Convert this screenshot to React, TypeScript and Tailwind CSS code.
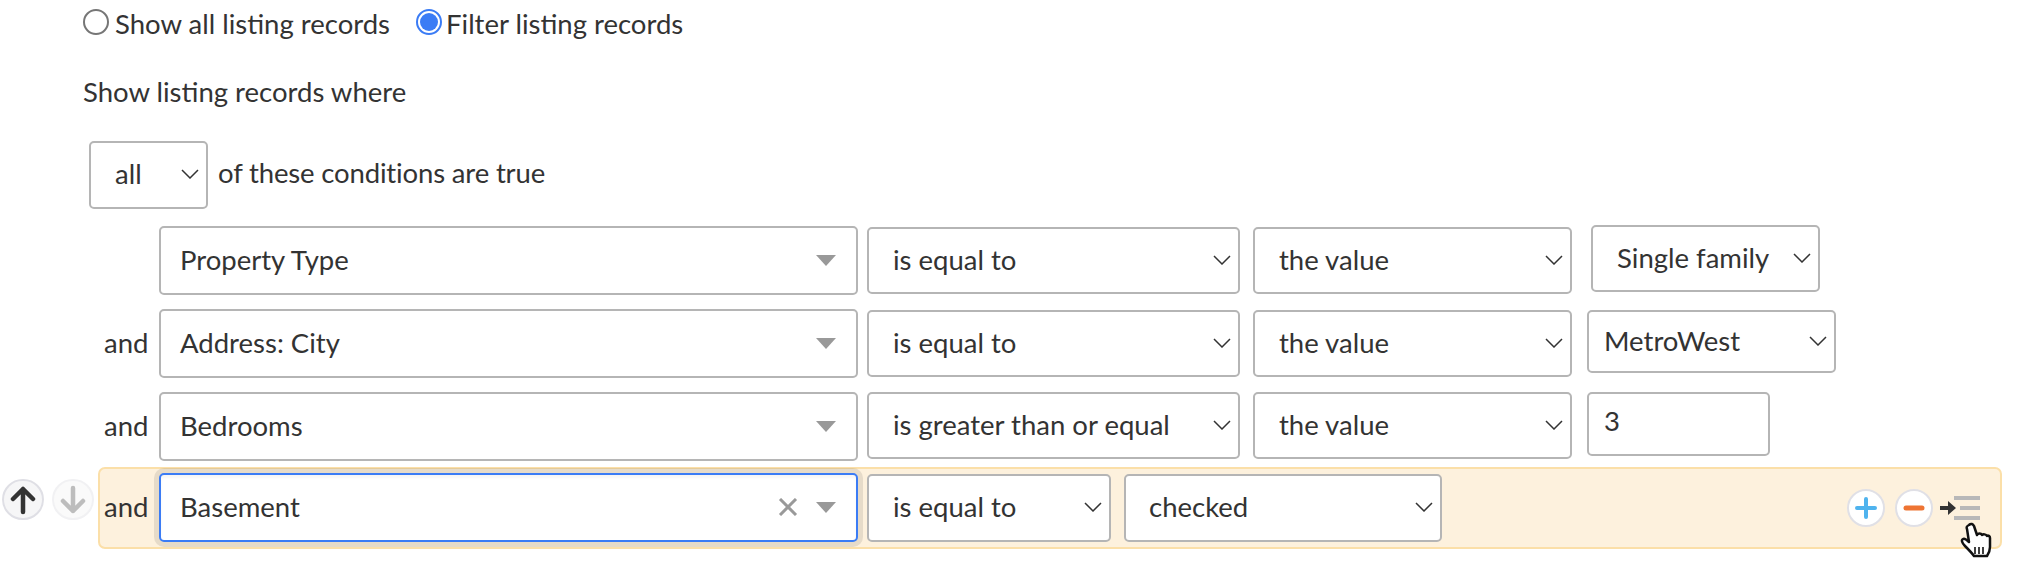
import React from "react";

function Chevron() {
  return (
    <svg width="18" height="10" viewBox="0 0 18 10" fill="none" className="shrink-0">
      <path d="M1 1l8 8 8-8" stroke="#333" strokeWidth="1.5" />
    </svg>
  );
}

function Caret() {
  return (
    <svg width="20" height="11" viewBox="0 0 20 11" className="shrink-0">
      <path d="M0 0h20L10 11z" fill="#999" />
    </svg>
  );
}

// 필드 선택 (넓은 콤보박스)
function Field({ label, focused }: { label: string; focused?: boolean }) {
  return (
    <div
      className={
        "flex h-[69px] w-[699px] shrink-0 items-center rounded-[5px] bg-white pb-[1px] pl-[19px] pr-[20px] " +
        (focused
          ? "border-2 border-[#3b7cf5] shadow-[0_0_0_5px_rgba(0,0,0,0.09),inset_0_3px_3px_rgba(0,0,0,0.04)]"
          : "border-2 border-[#b5b5b5]")
      }
    >
      <span className="flex-1">{label}</span>
      {focused && (
        <svg width="20" height="18" viewBox="0 0 20 18" fill="none" className="mr-[18px]">
          <path d="M2 1l16 16M18 1L2 17" stroke="#999" strokeWidth="3" />
        </svg>
      )}
      <Caret />
    </div>
  );
}

function Select({ label, className }: { label: string; className: string }) {
  return (
    <div
      className={
        "flex shrink-0 items-center justify-between rounded-[5px] border-2 border-[#b5b5b5] bg-white pb-[2px] pr-[7px] " +
        className
      }
    >
      <span>{label}</span>
      <Chevron />
    </div>
  );
}

function Row({ and, className, children }: { and?: boolean; className: string; children: React.ReactNode }) {
  return (
    <div className={"flex h-[69px] items-start pl-[98px] " + className}>
      <span className="flex h-[69px] w-[61px] shrink-0 items-center pb-[2px] pl-[6px]">{and ? "and" : ""}</span>
      {children}
    </div>
  );
}

function RoundButton({ children, className }: { children: React.ReactNode; className: string }) {
  return (
    <div className={"flex h-[41px] w-[42px] shrink-0 items-center justify-center rounded-full border-2 " + className}>
      {children}
    </div>
  );
}

export default function App() {
  return (
    <div
      className="relative h-[574px] w-[2020px] overflow-hidden bg-white text-[27.5px] leading-none text-[#333]"
      style={{ fontFamily: "Lato, 'Liberation Sans', sans-serif" }}
    >
      <div className="mt-[9px] flex h-[26px] items-center pl-[83px]">
        <span className="h-[26px] w-[26px] rounded-full border-2 border-[#767676] bg-white" />
        <span className="ml-[6px] pt-[4px]">Show all listing records</span>
        <span className="ml-[26px] flex h-[26px] w-[26px] items-center justify-center rounded-full border-2 border-[#3b7cf5] bg-white">
          <span className="h-[18px] w-[18px] rounded-full bg-[#3b7cf5]" />
        </span>
        <span className="ml-[4px] pt-[4px]">Filter listing records</span>
      </div>

      <div className="mt-[43px] h-[28px] pl-[83px]">Show listing records where</div>

      <div className="mt-[35px] flex items-center pl-[89px]">
        <Select label="all" className="h-[68px] w-[119px] pl-[24px]" />
        <span className="ml-[10px] pb-[4px] tracking-[-0.15px]">of these conditions are true</span>
      </div>

      <Row className="mt-[17px]">
        <Field label="Property Type" />
        <Select label="is equal to" className="ml-[9px] mt-[1px] h-[67px] w-[373px] pl-[24px]" />
        <Select label="the value" className="ml-[13px] mt-[1px] h-[67px] w-[319px] pl-[24px]" />
        <Select label="Single family" className="ml-[19px] mt-[-1px] h-[67px] w-[229px] pl-[24px]" />
      </Row>

      <Row and className="mt-[14px]">
        <Field label="Address: City" />
        <Select label="is equal to" className="ml-[9px] mt-[1px] h-[67px] w-[373px] pl-[24px]" />
        <Select label="the value" className="ml-[13px] mt-[1px] h-[67px] w-[319px] pl-[24px]" />
        <Select label="MetroWest" className="ml-[15px] mt-[1px] h-[63px] w-[249px] pl-[15px]" />
      </Row>

      <Row and className="mt-[14px]">
        <Field label="Bedrooms" />
        <Select label="is greater than or equal" className="ml-[9px] h-[67px] w-[373px] pl-[24px]" />
        <Select label="the value" className="ml-[13px] h-[67px] w-[319px] pl-[24px]" />
        <div className="ml-[15px] flex h-[64px] w-[183px] shrink-0 items-center rounded-[5px] border-2 border-[#b5b5b5] bg-white pb-[6px] pl-[15px]">
          3
        </div>
      </Row>

      <div className="mt-[6px] flex items-start pl-[2px]">
        <RoundButton className="mt-[12px] border-[#dfdfe5] bg-[#f6f6f7]">
          <svg width="26" height="30" viewBox="0 0 26 30" fill="none">
            <path d="M13 27V4M3 14L13 4l10 10" stroke="#333" strokeWidth="4.5" strokeLinecap="round" strokeLinejoin="round" />
          </svg>
        </RoundButton>
        <RoundButton className="ml-[8px] mt-[12px] border-[#f1f1f3] bg-[#fafafa]">
          <svg width="26" height="30" viewBox="0 0 26 30" fill="none">
            <path d="M13 3v23M3 16l10 10 10-10" stroke="#bdbdbd" strokeWidth="4.5" strokeLinecap="round" strokeLinejoin="round" />
          </svg>
        </RoundButton>
        <div className="ml-[4px] flex h-[82px] w-[1904px] items-start rounded-[7px] border-2 border-[#fbdfa8] bg-[#fdf1dd]">
          <span className="flex h-[78px] w-[59px] shrink-0 items-center pb-[2px] pl-[4px]">and</span>
          <div className="mt-[4px]">
            <Field label="Basement" focused />
          </div>
          <Select label="is equal to" className="ml-[9px] mt-[5px] h-[68px] w-[244px] pl-[24px]" />
          <Select label="checked" className="ml-[13px] mt-[5px] h-[68px] w-[318px] pl-[23px]" />
          <div className="ml-[405px] mt-[20px] flex items-center">
            <div className="flex h-[38px] w-[38px] items-center justify-center rounded-full border-2 border-[#e0e0e6] bg-white">
              <svg width="22" height="22" viewBox="0 0 22 22" fill="none">
                <path d="M11 2v18M2 11h18" stroke="#4fb3ee" strokeWidth="4" strokeLinecap="round" />
              </svg>
            </div>
            <div className="ml-[10px] flex h-[38px] w-[38px] items-center justify-center rounded-full border-2 border-[#e0e0e6] bg-white">
              <svg width="22" height="6" viewBox="0 0 22 6" fill="none">
                <path d="M3 3h16" stroke="#ee7433" strokeWidth="5" strokeLinecap="round" />
              </svg>
            </div>
            <svg width="40" height="24" viewBox="0 0 40 24" className="ml-[7px]">
              <path d="M14 0h26v4H14zM20 10h20v4H20zM14 20h26v4H14z" fill="#b8b8b8" />
              <path d="M0 10h8V5l8 7-8 7v-5H0z" fill="#333" />
            </svg>
          </div>
        </div>
      </div>

      {/* 마우스 커서 */}
      <svg width="32" height="38" viewBox="0 0 32 38" className="absolute left-[1960px] top-[522px]">
        <path
          d="M9 3c2-2 4-1 5 1l3 9c1-2 4-2 5 0 1-1 4-1 5 1 1-1 3 0 3 2v9c0 4-1 6-3 9H14c-2-3-5-6-9-10-3-3-4-6-2-7 2-1 4 1 6 3L7 7c-1-2 0-3 2-4z"
          fill="#fff"
          stroke="#111"
          strokeWidth="2.5"
          strokeLinejoin="round"
        />
        <path d="M15 25v7M19 25v7M23 25v7" stroke="#111" strokeWidth="1.6" />
      </svg>
    </div>
  );
}
